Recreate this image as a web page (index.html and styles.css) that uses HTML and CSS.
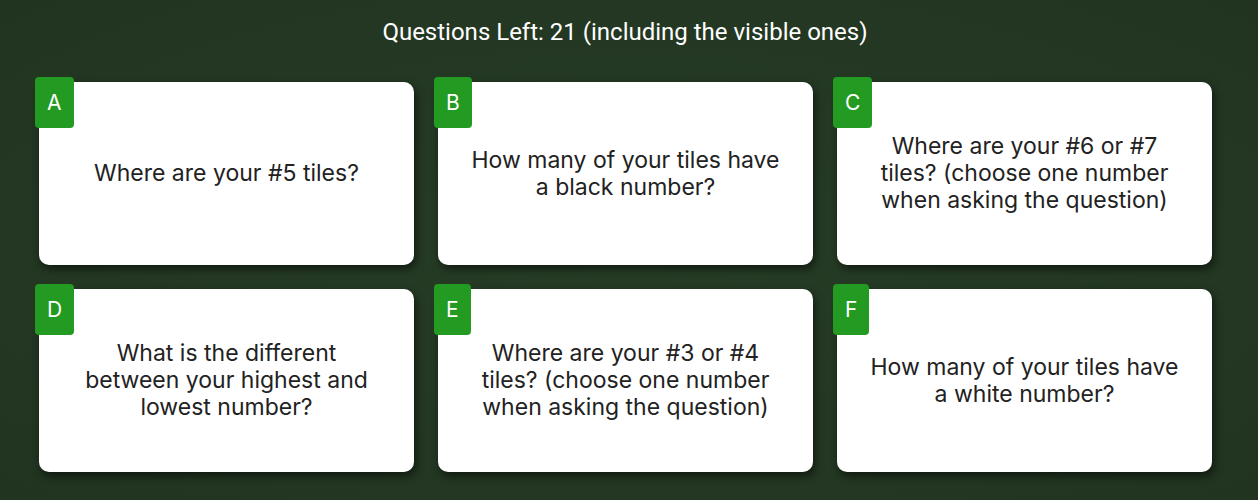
FILE: index.html
```html
<!DOCTYPE html>
<html lang="en">
<head>
<meta charset="utf-8">
<title>Questions</title>
<link rel="stylesheet" href="styles.css">
</head>
<body>
<div class="page">
  <h1 class="counter">Questions Left: 21 (including the visible ones)</h1>
  <div class="grid">
    <div class="card"><span class="badge">A</span><p class="question">Where are your #5 tiles?</p></div>
    <div class="card"><span class="badge">B</span><p class="question">How many of your tiles have a black number?</p></div>
    <div class="card"><span class="badge">C</span><p class="question">Where are your #6 or #7 tiles? (choose one number when asking the question)</p></div>
    <div class="card"><span class="badge">D</span><p class="question">What is the different between your highest and lowest number?</p></div>
    <div class="card"><span class="badge">E</span><p class="question">Where are your #3 or #4 tiles? (choose one number when asking the question)</p></div>
    <div class="card"><span class="badge">F</span><p class="question">How many of your tiles have a white number?</p></div>
  </div>
</div>
</body>
</html>
```
FILE: styles.css
```css
html, body {
  margin: 0;
  padding: 0;
}
body {
  background: #243823;
  width: 1258px;
  height: 500px;
  overflow: hidden;
}
.page {
  height: 500px;
  background: radial-gradient(ellipse at center, #263c25 0%, #233722 70%, #213420 100%);
}
.counter {
  margin: 0;
  padding: 17px 8px 0 0;
  height: 64px;
  box-sizing: border-box;
  text-align: center;
  color: #ffffff;
  font-family: Roboto, "Liberation Sans", sans-serif;
  font-weight: 400;
  font-size: 24px;
  line-height: 30px;
}
.grid {
  display: grid;
  grid-template-columns: repeat(3, 375px);
  grid-auto-rows: 183px;
  column-gap: 24px;
  row-gap: 24px;
  padding: 18px 0 0 39px;
}
.card {
  position: relative;
  background: #ffffff;
  border-radius: 10px;
  box-shadow: 2px 4px 8px rgba(0, 0, 0, 0.55);
  display: flex;
  align-items: center;
  justify-content: center;
  padding: 0 30px;
}
.badge {
  position: absolute;
  top: -5px;
  left: -4px;
  height: 51px;
  padding: 0 12px;
  min-width: 15px;
  box-sizing: border-box;
  background: #239a21;
  color: #ffffff;
  border-radius: 4px;
  font-family: Inter, "Noto Sans", sans-serif;
  font-size: 21px;
  line-height: 51px;
  text-align: center;
}
.question {
  margin: 0;
  text-align: center;
  color: #222222;
  font-family: Inter, "Noto Sans", sans-serif;
  font-size: 23px;
  line-height: 27px;
}
```
